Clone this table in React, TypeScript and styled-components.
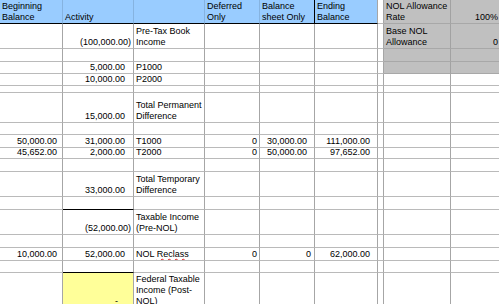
import React from 'react'
import styled, { createGlobalStyle } from 'styled-components'

const GlobalStyle = createGlobalStyle`
  html, body {
    margin: 0;
    padding: 0;
    background: #fff;
    overflow: hidden;
  }
`

type Fill = 'blue' | 'gray' | 'yellow'

const fills: Record<Fill, string> = {
  blue: '#99ccff',
  gray: '#c0c0c0',
  yellow: '#ffff99',
}

const VLINE = '#a6a6a6'
const HLINE = '#bababa'
const HEAD_GRID = '#86b3e0'
const DARK = '#000'

const Sheet = styled.div<{ $rows: string }>`
  display: grid;
  grid-template-columns: 63px 71px 71px 55px 55px 63px 6px 67px 51px;
  grid-template-rows: ${(p) => p.$rows};
  width: 502px;
  font-family: 'Liberation Sans', Arial, sans-serif;
  font-size: 9px;
  line-height: 11px;
  color: #000;
`

const Cell = styled.div<{
  $fill?: Fill
  $right?: boolean
  $pr: number
  $side: string
  $bottom: string
}>`
  box-sizing: border-box;
  display: flex;
  align-items: flex-end;
  justify-content: ${(p) => (p.$right ? 'flex-end' : 'flex-start')};
  text-align: ${(p) => (p.$right ? 'right' : 'left')};
  padding: 0 ${(p) => p.$pr}px 0 2px;
  background: ${(p) => (p.$fill ? fills[p.$fill] : '#fff')};
  border-right: 1px solid ${(p) => p.$side};
  border-bottom: 1px solid ${(p) => p.$bottom};
  white-space: pre;
  overflow: hidden;
`

const Misspelt = styled.span`
  text-decoration: underline wavy #e02020;
  text-decoration-thickness: 1px;
  text-underline-offset: 1px;
`

type Spec = {
  t?: React.ReactNode
  r?: boolean
  pr?: number
  fill?: Fill
  side?: string
  bottom?: string
}

type Row = { h: number; cells: Spec[] }

const num = (t: string, pr: number, extra: Spec = {}): Spec => ({ t, r: true, pr, ...extra })
const txt = (t: React.ReactNode, extra: Spec = {}): Spec => ({ t, ...extra })
const gray: Spec = { fill: 'gray', side: '#a2a2a2', bottom: '#a8a8a8' }
const head = (t: string, side = HEAD_GRID): Spec => ({ t, fill: 'blue', side, bottom: DARK })

const rows: Row[] = [
  {
    h: 24,
    cells: [
      head('Beginning\nBalance'),
      head('Activity'),
      head(''),
      head('Deferred\nOnly'),
      head('Balance\nsheet Only', DARK),
      head('Ending\nBalance', VLINE),
      {},
      txt('NOL Allowance\nRate', gray),
      num('100%', 3, gray),
    ],
  },
  {
    h: 25,
    cells: [
      {},
      num('(100,000.00)', 2),
      txt('Pre-Tax Book\nIncome'),
      {},
      {},
      {},
      {},
      txt('Base NOL\nAllowance', gray),
      num('0', 3, gray),
    ],
  },
  { h: 13, cells: [{}, {}, {}, {}, {}, {}, {}, gray, gray] },
  { h: 12, cells: [{}, num('5,000.00', 8), txt('P1000'), {}, {}, {}, {}, gray, gray] },
  { h: 12, cells: [{}, num('10,000.00', 8), txt('P2000')] },
  { h: 7, cells: [] },
  { h: 30, cells: [{}, num('15,000.00', 8), txt('Total Permanent\nDifference')] },
  { h: 12, cells: [] },
  {
    h: 13,
    cells: [
      num('50,000.00', 5),
      num('31,000.00', 8),
      txt('T1000'),
      num('0', 2),
      num('30,000.00', 7),
      num('111,000.00', 7),
    ],
  },
  {
    h: 11,
    cells: [
      num('45,652.00', 5),
      num('2,000.00', 8),
      txt('T2000'),
      num('0', 2),
      num('50,000.00', 7),
      num('97,652.00', 7),
    ],
  },
  { h: 13, cells: [] },
  { h: 25, cells: [{}, num('33,000.00', 8), txt('Total Temporary\nDifference')] },
  { h: 13, cells: [{}, { bottom: DARK }] },
  { h: 25, cells: [{}, num('(52,000.00)', 2), txt('Taxable Income\n(Pre-NOL)')] },
  { h: 13, cells: [] },
  {
    h: 13,
    cells: [
      num('10,000.00', 5),
      num('52,000.00', 8),
      txt(
        <>
          NOL <Misspelt>Reclass</Misspelt>
        </>
      ),
      num('0', 2),
      num('0', 3),
      num('62,000.00', 7),
    ],
  },
  { h: 12, cells: [{}, { bottom: DARK }] },
  {
    h: 35,
    cells: [{}, num('-', 15, { fill: 'yellow' }), txt('Federal Taxable\nIncome (Post-\nNOL)')],
  },
]

const COLS = 9

export default function App() {
  return (
    <>
      <GlobalStyle />
      <Sheet $rows={rows.map((r) => `${r.h}px`).join(' ')}>
        {rows.map((row, ri) =>
          Array.from({ length: COLS }, (_, ci) => {
            const c = row.cells[ci] ?? {}
            return (
              <Cell
                key={`${ri}-${ci}`}
                $fill={c.fill}
                $right={c.r}
                $pr={c.pr ?? 2}
                $side={c.side ?? VLINE}
                $bottom={c.bottom ?? HLINE}
              >
                {c.t}
              </Cell>
            )
          })
        )}
      </Sheet>
    </>
  )
}
